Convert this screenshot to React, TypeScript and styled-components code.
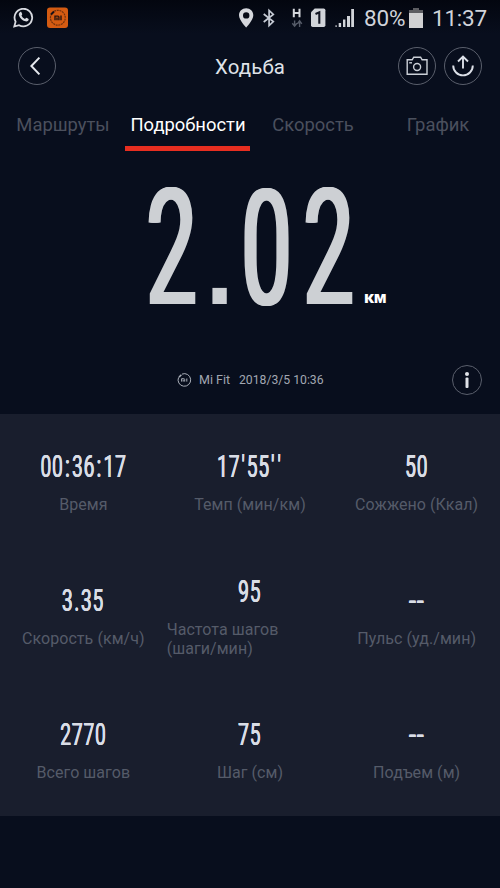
import React from "react";
import styled, { createGlobalStyle } from "styled-components";

const GlobalStyle = createGlobalStyle`
  * { box-sizing: border-box; }
  body { margin: 0; background: #080e1d; }
`;

const Screen = styled.div`
  width: 500px;
  height: 888px;
  display: flex;
  flex-direction: column;
  overflow: hidden;
  color: #d6d9df;
  font-family: Roboto, "Liberation Sans", sans-serif;
  background: linear-gradient(#03060f 0, #080e1d 34px, #080e1d 100%);
`;

const StatusBar = styled.div`
  height: 36px;
  flex: none;
  display: flex;
  justify-content: space-between;
  padding: 0 13px;
`;

const StatusGroup = styled.div<{ $gap?: number }>`
  display: flex;
  align-items: center;
  gap: ${(p) => p.$gap ?? 0}px;
`;

const StatusText = styled.span<{ $align?: string; $width: number }>`
  width: ${(p) => p.$width}px;
  font-size: 22.5px;
  line-height: 38px;
  letter-spacing: -0.2px;
  text-align: ${(p) => p.$align ?? "left"};
  white-space: nowrap;
  color: #d0d3da;
`;

const Header = styled.header`
  height: 60px;
  flex: none;
  display: grid;
  grid-template-columns: 100px 1fr 100px;
  align-items: center;
  padding: 0 18px;
`;

const Title = styled.h1`
  margin: 0;
  text-align: center;
  font-size: 20.4px;
  font-weight: 400;
  line-height: 24px;
  padding-top: 2px;
  letter-spacing: 0.15px;
  color: #dfe2e8;
`;

const HeaderActions = styled.div`
  display: flex;
  justify-content: flex-end;
  gap: 8px;
`;

const RoundButton = styled.button<{ $size?: number }>`
  width: ${(p) => p.$size ?? 38}px;
  height: ${(p) => p.$size ?? 38}px;
  padding: 0;
  display: flex;
  align-items: center;
  justify-content: center;
  border: 1px solid #5a5f6c;
  border-radius: 50%;
  background: transparent;
`;

const Tabs = styled.nav`
  height: 55px;
  flex: none;
  display: grid;
  grid-template-columns: repeat(4, 125px);
`;

const Tab = styled.div<{ $active?: boolean }>`
  display: flex;
  justify-content: center;
  padding: 18px 0 0 1px;
  font-size: 18.4px;
  line-height: 22px;
  color: ${(p) => (p.$active ? "#ffffff" : "#4b505d")};
  border-bottom: 5px solid ${(p) => (p.$active ? "#e72e20" : "transparent")};
`;

const Hero = styled.section`
  height: 210px;
  flex: none;
  padding: 28px 0 0 141px;
  display: flex;
  align-items: flex-start;
`;

const Distance = styled.div`
  display: flex;
  align-items: baseline;
  color: #cdd0d4;
  font-size: 162px;
  font-weight: 400;
  line-height: 140px;
`;

const Glyph = styled.span<{ $width: number }>`
  width: ${(p) => p.$width}px;
  display: flex;
  justify-content: center;

  & > span {
    display: block;
    transform: scaleX(0.55);
    text-shadow: -3.5px 0 #cdd0d4, 3.5px 0 #cdd0d4, -1.7px 0 #cdd0d4, 1.7px 0 #cdd0d4;
  }
`;

const Point = styled.span`
  width: 33px;
  display: flex;
  justify-content: center;
  font-family: "Liberation Sans", sans-serif;
  font-size: 150px;
`;

const Unit = styled.span`
  margin: 106px 0 0 4px;
  font-family: "Open Sans", sans-serif;
  font-size: 15px;
  font-weight: 800;
  line-height: 24px;
  letter-spacing: -0.4px;
  color: #fff;
`;

const Source = styled.div`
  height: 53px;
  flex: none;
  display: grid;
  grid-template-columns: 177px 1fr 48px;
  align-items: start;
`;

const SourceText = styled.div`
  grid-column: 2;
  display: flex;
  align-items: center;
  height: 38px;
  font-size: 12.2px;
  line-height: 16px;
  color: #a2a7b2;
`;

const SourceName = styled.span`
  width: 40px;
  margin-left: 7px;
  font-size: 12.5px;
`;

const InfoSlot = styled.div`
  padding-top: 4px;
`;

const Stats = styled.section`
  height: 402px;
  flex: none;
  display: grid;
  grid-template-columns: repeat(3, 166.67px);
  grid-template-rows: repeat(3, 134px);
  background: #191e2d;
`;

const Stat = styled.div`
  display: flex;
  flex-direction: column;
  align-items: center;
  justify-content: center;
  padding-top: 4px;
`;

const StatValue = styled.div<{ $empty: boolean }>`
  height: 30px;
  margin-bottom: 13px;
  font-size: 31px;
  line-height: 30px;
  letter-spacing: 1.3px;
  white-space: nowrap;
  color: #d9dde5;
  text-shadow: 0.5px 0 #d9dde5, -0.5px 0 #d9dde5;
  transform: scaleX(${(p) => (p.$empty ? 0.8 : 0.62)});
`;

const Separator = styled.span<{ $pad: number }>`
  padding: 0 ${(p) => p.$pad}px;
`;

const StatLabel = styled.div<{ $fill: boolean }>`
  align-self: ${(p) => (p.$fill ? "stretch" : "auto")};
  font-size: 16px;
  line-height: 19px;
  letter-spacing: 0.06px;
  white-space: pre-line;
  color: #555b69;
`;

const stats = [
  ["00:36:17", "Время"],
  ["17'55''", "Темп (мин/км)"],
  ["50", "Сожжено (Ккал)"],
  ["3.35", "Скорость (км/ч)"],
  ["95", "Частота шагов\n(шаги/мин)"],
  ["--", "Пульс (уд./мин)"],
  ["2770", "Всего шагов"],
  ["75", "Шаг (см)"],
  ["--", "Подъем (м)"],
];

const separatorPadding: Record<string, number> = { ":": 2.3, ".": 1.2, "'": 1.8 };

const WhatsAppIcon = () => (
  <svg width="21" height="21" viewBox="0 0 21 21" fill="none">
    <path d="M1.3 18.5l1.3-4.8A8.8 8.8 0 1 1 6 17.2z" stroke="#d8dae0" strokeWidth="1.8" />
    <path d="M7 4.2c.6-.5 1.1-.5 1.4.1l.8 1.8c.2.6-.8 1.2-.6 1.7.7 1.5 1.8 2.5 3.3 3.1.6.1 1-1.2 1.6-1.1l1.8.9c.7.4.3 1.5-.2 2-.7.7-1.6.9-2.8.6-3.1-.8-5.5-3.1-6.4-6-.3-1.4.1-2.4 1.1-3.1z" fill="#d8dae0" />
  </svg>
);

const MiBadge = () => (
  <svg width="22" height="22" viewBox="0 0 22 22">
    <rect x="0" y=".5" width="21" height="20.5" rx="3" fill="#d45b12" />
    <path d="M7.2 4.3a7.4 7.4 0 1 1-3 3.2" fill="none" stroke="#6f300d" strokeWidth="1.2" strokeDasharray="2 .7" />
    <path d="M4 7.5l3-3" stroke="#141019" strokeWidth="2" />
    <path d="M8 13.3V9.1h2.9q1 0 1 1v3.2M10 10.5v2.8M14 8.5v4.8" fill="none" stroke="#27130e" strokeWidth="1.4" />
  </svg>
);

const SignalIcons = () => (
  <svg width="126" height="24" viewBox="0 0 126 24">
    <path fill="#d5d7dc" fillRule="evenodd" d="M8.2 2.2C4 2.2 1 5.3 1 9.2c0 4.8 7.2 12.3 7.2 12.3s7.1-7.5 7.1-12.3c0-3.9-3-7-7.1-7zm0 4a3.2 3.2 0 1 1 0 6.4 3.2 3.2 0 0 1 0-6.4z" />
    <path d="M25.7 8l9.6 7.5-4.2 4V4.5l4.2 4-9.6 7.5" fill="none" stroke="#c6cbd5" strokeWidth="1.7" />
    <path d="M55.8 2.7v8.5M61.5 2.7v8.5M56 7h5.5" fill="none" stroke="#d5d7dc" strokeWidth="2" />
    <path d="M56.6 14.5v5M54.3 17.2l2.3 3 2.3-3M61.6 21v-5M59.4 17.8l2.2-3 2.2 3" fill="none" stroke="#555b68" strokeWidth="1.4" />
    <path d="M73 6.2l3.7-3.7h9q1.7 0 1.7 1.7v15q0 1.8-1.7 1.8H74.7q-1.7 0-1.7-1.8z" fill="#d1d4d9" />
    <path d="M77.5 8l3.8-1.7v11.5" fill="none" stroke="#121623" strokeWidth="2.1" />
    <path d="M97.5 21v-1.8h1.2V21zM100.7 21v-4h2.4v4zM105 21v-7.6h2.4V21zM109 21V10h3v11zM113.2 21V3h2.8v18z" fill="#d1d4d9" />
  </svg>
);

const BatteryIcon = () => (
  <svg width="14" height="22" viewBox="0 0 14 22">
    <path d="M0 3h4V1h6v2h4v4H0z" fill="#5c5d62" />
    <path d="M0 6h14v15H0z" fill="#d0d1d3" />
  </svg>
);

const BackIcon = () => (
  <svg width="18" height="22" viewBox="0 0 18 22">
    <path d="M11.4 2.6L3.4 11l8 8.4" fill="none" stroke="#e5e8ee" strokeWidth="2" />
  </svg>
);

const CameraIcon = () => (
  <svg width="24" height="22" viewBox="0 0 24 22" fill="none" stroke="#cbd0d8" strokeWidth="1.4">
    <path d="M2.2 4.8h5l1.5-2.6h6.9l1.5 2.6H22v14.4H2.2z" />
    <circle cx="12.1" cy="12" r="3.5" />
    <path d="M4.2 7.8h2.8" />
  </svg>
);

const ShareIcon = () => (
  <svg width="24" height="24" viewBox="0 0 24 24" fill="none" stroke="#dce0e8" strokeWidth="1.9">
    <path d="M12 14.5V3M7 7.5L12 2.6l5 4.9M2.2 11.6a9.8 9.8 0 0 0 19.6 0" />
  </svg>
);

const MiRing = () => (
  <svg width="15" height="15" viewBox="0 0 15 15" fill="none" stroke="#a9aeb8">
    <path d="M5 1.1a6.3 6.3 0 1 1-3.4 3.3" strokeWidth="1" />
    <path d="M2 4.1l2.4-2.3" strokeWidth="1.5" />
    <path d="M4.6 8.6V5.7h2.1q1 0 1 .8v2.1M6.2 6.6v2M9.8 5.5v3.1" strokeWidth="1" />
  </svg>
);

const InfoIcon = () => (
  <svg width="8" height="20" viewBox="0 0 8 20" fill="#dfe2e8">
    <circle cx="4" cy="4" r="2" />
    <rect x="2.5" y="7.5" width="3" height="10.5" rx="1" />
  </svg>
);

export default function App() {
  return (
    <Screen>
      <GlobalStyle />
      <StatusBar>
        <StatusGroup $gap={13}>
          <WhatsAppIcon />
          <MiBadge />
        </StatusGroup>
        <StatusGroup>
          <SignalIcons />
          <StatusText $width={45}>80%</StatusText>
          <BatteryIcon />
          <StatusText $width={64} $align="right">11:37</StatusText>
        </StatusGroup>
      </StatusBar>
      <Header>
        <RoundButton aria-label="Назад"><BackIcon /></RoundButton>
        <Title>Ходьба</Title>
        <HeaderActions>
          <RoundButton aria-label="Снимок"><CameraIcon /></RoundButton>
          <RoundButton aria-label="Поделиться"><ShareIcon /></RoundButton>
        </HeaderActions>
      </Header>
      <Tabs>
        <Tab>Маршруты</Tab>
        <Tab $active>Подробности</Tab>
        <Tab>Скорость</Tab>
        <Tab>График</Tab>
      </Tabs>
      <Hero>
        <Distance>
          <Glyph $width={62}><span>2</span></Glyph>
          <Point>.</Point>
          <Glyph $width={62}><span>0</span></Glyph>
          <Glyph $width={62}><span>2</span></Glyph>
        </Distance>
        <Unit>км</Unit>
      </Hero>
      <Source>
        <SourceText>
          <MiRing />
          <SourceName>Mi Fit</SourceName>
          <span>2018/3/5 10:36</span>
        </SourceText>
        <InfoSlot>
          <RoundButton $size={30} aria-label="Информация"><InfoIcon /></RoundButton>
        </InfoSlot>
      </Source>
      <Stats>
        {stats.map(([value, label]) => (
          <Stat key={label}>
            <StatValue $empty={value === "--"}>
              {value.split(/([:.'])/).map((part, i) =>
                part in separatorPadding ? (
                  <Separator key={i} $pad={separatorPadding[part]}>{part}</Separator>
                ) : (
                  part
                )
              )}
            </StatValue>
            <StatLabel $fill={label.includes("\n")}>{label}</StatLabel>
          </Stat>
        ))}
      </Stats>
    </Screen>
  );
}
